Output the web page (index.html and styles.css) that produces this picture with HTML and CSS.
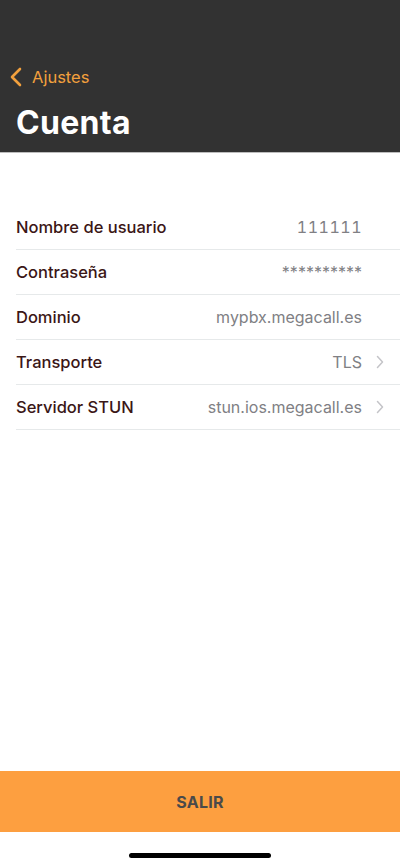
FILE: index.html
```html
<!DOCTYPE html>
<html lang="es">

<head>
    <meta charset="UTF-8">
    <meta name="viewport" content="width=device-width, initial-scale=1.0">
    <title>Cuenta</title>
    <link rel="stylesheet" href="styles.css">
</head>

<body>
    <div class="screen">
        <header class="nav-header">
            <a class="back-link" href="#">
                <svg class="back-icon" width="12" height="20" viewBox="0 0 12 20">
                    <path d="M10 2 L2 10 L10 18" fill="none" stroke="#f2a03d" stroke-width="2.6" stroke-linecap="round" stroke-linejoin="round"/>
                </svg>
                <span>Ajustes</span>
            </a>
            <h1 class="page-title">Cuenta</h1>
        </header>

        <div class="settings-list">
            <div class="settings-row">
                <span class="row-label">Nombre de usuario</span>
                <span class="row-value value-pad digits">111111</span>
            </div>
            <div class="settings-row">
                <span class="row-label">Contraseña</span>
                <span class="row-value value-pad">**********</span>
            </div>
            <div class="settings-row">
                <span class="row-label">Dominio</span>
                <span class="row-value value-pad">mypbx.megacall.es</span>
            </div>
            <div class="settings-row">
                <span class="row-label">Transporte</span>
                <span class="row-value">TLS</span>
                <svg class="chevron" width="8" height="14" viewBox="0 0 8 14">
                    <path d="M1.5 1.5 L6.5 7 L1.5 12.5" fill="none" stroke="#c4c4c8" stroke-width="1.5" stroke-linecap="round" stroke-linejoin="round"/>
                </svg>
            </div>
            <div class="settings-row">
                <span class="row-label">Servidor STUN</span>
                <span class="row-value">stun.ios.megacall.es</span>
                <svg class="chevron" width="8" height="14" viewBox="0 0 8 14">
                    <path d="M1.5 1.5 L6.5 7 L1.5 12.5" fill="none" stroke="#c4c4c8" stroke-width="1.5" stroke-linecap="round" stroke-linejoin="round"/>
                </svg>
            </div>
        </div>

        <div class="spacer"></div>

        <button class="logout-btn">SALIR</button>

        <div class="home-bar">
            <div class="home-indicator"></div>
        </div>
    </div>
</body>

</html>
```

FILE: styles.css
```css
* {
    box-sizing: border-box;
    margin: 0;
    padding: 0;
    font-family: 'Inter', 'Liberation Sans', Arial, sans-serif;
}

body {
    background-color: #ffffff;
    width: 400px;
    height: 867px;
    overflow: hidden;
}

.screen {
    display: flex;
    flex-direction: column;
    height: 867px;
}

.nav-header {
    background-color: #323232;
    height: 153px;
    padding: 65px 16px 0 10px;
    border-bottom: 1px solid #bdbdbd;
}

.back-link {
    display: flex;
    align-items: center;
    gap: 10px;
    color: #f2a03d;
    text-decoration: none;
    font-size: 16.5px;
    height: 24px;
}

.page-title {
    color: #ffffff;
    font-size: 32px;
    font-weight: 700;
    margin: 14px 0 0 6px;
    letter-spacing: 0.3px;
}

.settings-list {
    margin-top: 52px;
    padding-left: 16px;
}

.settings-row {
    display: flex;
    align-items: center;
    height: 45px;
    padding-right: 16px;
    border-bottom: 1px solid #e6e9ea;
}

.row-label {
    flex: 1;
    font-size: 16.5px;
    font-weight: 500;
    color: #3b1616;
}

.row-value {
    font-size: 16px;
    color: #808084;
}

.digits {
    font-variant-numeric: tabular-nums;
    letter-spacing: 0.5px;
}

.value-pad {
    margin-right: 22px;
}

.chevron {
    margin-left: 14px;
}

.spacer {
    flex: 1;
}

.logout-btn {
    height: 61px;
    width: 100%;
    border: none;
    background-color: #fd9f40;
    color: #4a4a4a;
    font-size: 16px;
    font-weight: 700;
    letter-spacing: 0.3px;
}

.home-bar {
    height: 35px;
    display: flex;
    justify-content: center;
    padding-top: 21px;
}

.home-indicator {
    width: 142px;
    height: 5px;
    border-radius: 3px;
    background-color: #000000;
}
```
